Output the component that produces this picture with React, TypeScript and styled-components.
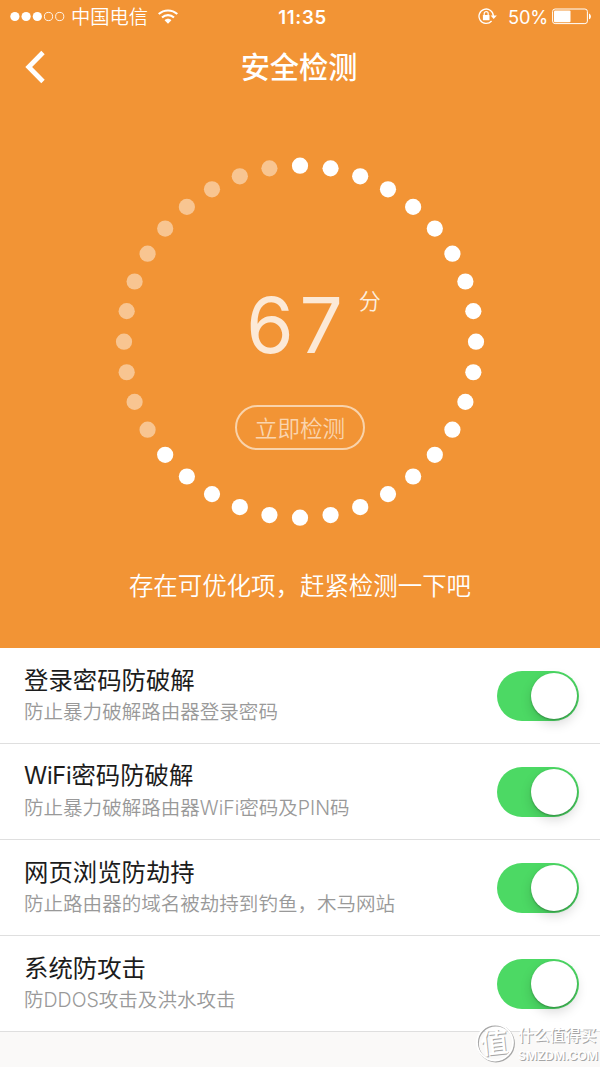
import React, { useState } from "react";
import styled, { createGlobalStyle } from "styled-components";

const GlobalStyle = createGlobalStyle`
  * { box-sizing: border-box; }
  body {
    margin: 0;
    background: #faf9f8;
    font-family: Inter, "Noto Sans CJK SC", sans-serif;
  }
`;

const Screen = styled.main`
  position: relative;
  width: 600px;
  height: 1067px;
  overflow: hidden;
  background: #faf9f8;
`;

const Hero = styled.section`
  height: 648px;
  background: #f29435;
  color: #fff;
  display: flex;
  flex-direction: column;
`;

const StatusBar = styled.div`
  height: 33px;
  display: grid;
  grid-template-columns: 1fr auto 1fr;
  align-items: center;
  padding: 0 9px 0 10px;
`;

const StatusGroup = styled.div<{ $end?: boolean }>`
  display: flex;
  align-items: center;
  justify-content: ${(p) => (p.$end ? "flex-end" : "flex-start")};
`;

const Carrier = styled.span`
  font-size: 19.3px;
  line-height: 32px;
  margin: 0 10px 0 6px;
  font-weight: 350;
`;

const Clock = styled.span`
  font-size: 18.6px;
  font-weight: 600;
  letter-spacing: 0.7px;
  padding-left: 4px;
`;

const Percent = styled.span`
  font-size: 18.3px;
  margin: 0 4px 0 11px;
  letter-spacing: -0.2px;
`;

const NavBar = styled.header`
  height: 68px;
  display: grid;
  grid-template-columns: 72px 1fr 72px;
  align-items: center;
`;

const BackButton = styled.button`
  border: 0;
  padding: 0 0 0 24px;
  background: none;
  display: flex;
`;

const Heading = styled.h1`
  margin: 0;
  padding: 2px 2px 0 0;
  font-size: 29.2px;
  line-height: 40px;
  font-weight: 500;
  text-align: center;
`;

const Gauge = styled.div`
  display: grid;
  width: 368px;
  height: 368px;
  margin: 56.5px auto 0;
  > * { grid-area: 1 / 1; }
`;

const GaugeBody = styled.div`
  display: flex;
  flex-direction: column;
  align-items: center;
  padding-top: 120px;
`;

const ScoreLine = styled.div`
  display: flex;
  align-items: flex-start;
  height: 127px;
  padding-left: 27px;
`;

const Score = styled.span`
  font-size: 76.5px;
  line-height: 94px;
  letter-spacing: 6px;
  color: #fce9d6;
`;

const Unit = styled.span`
  font-size: 22px;
  line-height: 32px;
  margin: 7px 0 0 10px;
  font-weight: 350;
  color: #fdeedd;
`;

const CheckButton = styled.button`
  width: 130px;
  height: 45px;
  padding: 1px 0 0;
  border: 2px solid #f9d3ab;
  border-radius: 23px;
  background: none;
  color: #fad5af;
  font: 350 22.6px/42px Inter, "Noto Sans CJK SC", sans-serif;
  white-space: nowrap;
`;

const Message = styled.p`
  margin: 40px 0 0;
  font-size: 24.45px;
  line-height: 40px;
  font-weight: 350;
  text-align: center;
`;

const List = styled.ul`
  margin: 0;
  padding: 0;
  list-style: none;
  background: #fff;
`;

const Row = styled.li`
  height: 96px;
  display: flex;
  align-items: center;
  justify-content: space-between;
  padding: 0 21px 0 24px;
  border-bottom: 1px solid #dfdfdf;
`;

const RowText = styled.div`
  display: flex;
  flex-direction: column;
  padding-bottom: 4px;
`;

const RowTitle = styled.span`
  font-size: 24.4px;
  line-height: 36px;
  color: #1c1c1c;
`;

const Latin = styled.span`
  font-size: 23.6px;
  letter-spacing: -0.3px;
`;

const RowNote = styled.span`
  font-size: 19.55px;
  line-height: 28px;
  font-weight: 350;
  color: #999;
`;

const Switch = styled.button<{ $on: boolean }>`
  width: 82px;
  height: 50px;
  padding: 2px;
  border: 0;
  border-radius: 25px;
  display: flex;
  justify-content: ${(p) => (p.$on ? "flex-end" : "flex-start")};
  background: ${(p) => (p.$on ? "#4cd964" : "#e5e5e5")};
`;

const Knob = styled.span`
  width: 46px;
  height: 46px;
  border-radius: 50%;
  background: #fff;
  box-shadow: 0 1px 2px rgba(0, 0, 0, 0.28), 0 5px 12px rgba(0, 0, 0, 0.15);
`;

const Watermark = styled.div`
  position: absolute;
  left: 474px;
  top: 1021px;
`;

const SignalDots = () => (
  <svg width="55" height="12" viewBox="0 0 55 12">
    {[0, 1, 2, 3, 4].map((i) => (
      <circle key={i} cx={4.9 + i * 11.2} cy="5.5" r={i < 3 ? 4.6 : 4.1}
        fill={i < 3 ? "#fff" : "none"} stroke="#fff" strokeWidth={i < 3 ? 0 : 0.9} />
    ))}
  </svg>
);

const WifiIcon = () => (
  <svg width="20" height="16" viewBox="0 0 20 16" fill="none" stroke="#fff" strokeWidth="2.1">
    <path d="M.7 5.1C6 .2 14 .2 19.3 5.1" />
    <path d="M4 8.5C7.4 5.3 12.6 5.3 16 8.5" />
    <path d="M6.6 11.2C8.4 9.2 11.6 9.2 13.4 11.2L10 14.8Z" fill="#fff" stroke="none" />
  </svg>
);

const RotationLock = () => (
  <svg width="19" height="17" viewBox="0 0 19 17" fill="none" stroke="#fff">
    <path d="M15.4 8.2A7.2 7.2 0 1 0 13.6 13" strokeWidth="1.3" />
    <path d="M12.6 7.4H18.8L15.7 11Z" fill="#fff" stroke="none" />
    <rect x="4.9" y="7" width="6.6" height="5.2" rx=".5" fill="#fff" stroke="none" />
    <path d="M6.2 7.2V5.7a2 2 0 0 1 4 0V7.2" strokeWidth="1.2" />
  </svg>
);

const Battery = () => (
  <svg width="39" height="17" viewBox="0 0 39 17">
    <rect x=".6" y="1" width="34.8" height="14.6" rx="2.5" fill="none" stroke="#fff" strokeWidth="1" />
    <rect x="2" y="2.4" width="16.5" height="11.8" rx="1" fill="#fff" />
    <path d="M37 5.5c2.5 1 2.5 4.8 0 5.8z" fill="#fff" />
  </svg>
);

const ScoreRing = () => (
  <svg width="368" height="368" viewBox="0 0 368 368" fill="#fff" overflow="visible">
    {Array.from({ length: 36 }, (_, i) => {
      const a = (i * Math.PI) / 18;
      return (
        <circle key={i} cx={184 + 176 * Math.sin(a)} cy={183.7 - 176 * Math.cos(a)} r="8.1"
          fillOpacity={i < 24 ? 1 : 0.46} />
      );
    })}
  </svg>
);

const WatermarkMark = () => (
  <svg width="126" height="46" viewBox="0 0 126 46" fontFamily='"Noto Sans CJK SC", sans-serif'>
    {[{ d: 1, c: "#a6a6a6" }, { d: 0, c: "#fff" }].map(({ d, c }) => (
      <g key={d} transform={`translate(${d} ${d})`} fill={c}>
        <circle cx="21" cy="21.5" r="18" fill="none" stroke={c} strokeWidth="1.8" />
        <text x="6" y="32" fontSize="28" fontWeight="500" transform="rotate(-6 22 22)">值</text>
        <text x="44" y="19.5" fontSize="15.7" fontWeight="500">什么值得买</text>
        <text x="44" y="39" fontSize="12.2" fontWeight="600" fontFamily="Inter, sans-serif">SMZDM.COM</text>
      </g>
    ))}
  </svg>
);

const settings = [
  { title: "登录密码防破解", note: "防止暴力破解路由器登录密码" },
  { latin: "WiFi", title: "密码防破解", note: "防止暴力破解路由器WiFi密码及PIN码" },
  { title: "网页浏览防劫持", note: "防止路由器的域名被劫持到钓鱼，木马网站" },
  { title: "系统防攻击", note: "防DDOS攻击及洪水攻击" },
];

export default function App() {
  const [enabled, setEnabled] = useState(settings.map(() => true));
  const toggle = (index: number) =>
    setEnabled((prev) => prev.map((on, i) => (i === index ? !on : on)));

  return (
    <Screen>
      <GlobalStyle />
      <Hero>
        <StatusBar>
          <StatusGroup>
            <SignalDots />
            <Carrier>中国电信</Carrier>
            <WifiIcon />
          </StatusGroup>
          <Clock>11:35</Clock>
          <StatusGroup $end>
            <RotationLock />
            <Percent>50%</Percent>
            <Battery />
          </StatusGroup>
        </StatusBar>
        <NavBar>
          <BackButton aria-label="返回">
            <svg width="22" height="34" viewBox="0 0 22 34" fill="none" stroke="#fff" strokeWidth="4.8">
              <path d="M19 2.5L4.7 17L19 31.5" />
            </svg>
          </BackButton>
          <Heading>安全检测</Heading>
        </NavBar>
        <Gauge>
          <ScoreRing />
          <GaugeBody>
            <ScoreLine>
              <Score>67</Score>
              <Unit>分</Unit>
            </ScoreLine>
            <CheckButton>立即检测</CheckButton>
          </GaugeBody>
        </Gauge>
        <Message>存在可优化项，赶紧检测一下吧</Message>
      </Hero>
      <List>
        {settings.map((item, i) => (
          <Row key={item.title}>
            <RowText>
              <RowTitle>
                {item.latin && <Latin>{item.latin}</Latin>}
                {item.title}
              </RowTitle>
              <RowNote>{item.note}</RowNote>
            </RowText>
            <Switch role="switch" aria-checked={enabled[i]} aria-label={(item.latin ?? "") + item.title}
              $on={enabled[i]} onClick={() => toggle(i)}>
              <Knob />
            </Switch>
          </Row>
        ))}
      </List>
      <Watermark><WatermarkMark /></Watermark>
    </Screen>
  );
}
